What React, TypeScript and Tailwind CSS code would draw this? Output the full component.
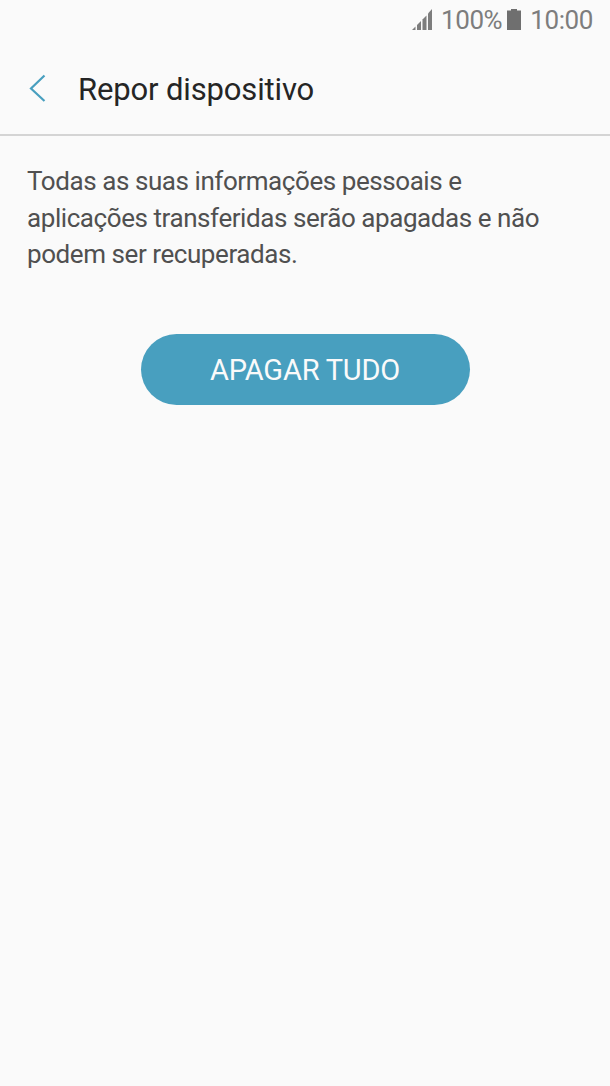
import React from 'react';

const SignalIcon: React.FC = () => (
  <svg className="-mt-px" width="21" height="21" viewBox="0 0 21 21" fill="#7d7d7d">
    <path d="M0 21L3.5 17.5V21z" />
    <path d="M5 21V16L9 12V21z" />
    <path d="M10.5 21V10.5L14.5 6.5V21z" />
    <path d="M16 21V4.5L20 0V21z" />
  </svg>
);

const BatteryIcon: React.FC = () => (
  <svg className="-mt-px" width="14" height="21" viewBox="0 0 14 21" fill="#6f6f6f">
    <path d="M4 0h6v1.5h4v19.5H0V1.5h4z" />
  </svg>
);

const App: React.FC = () => {
  return (
    <div className="flex h-[1086px] w-[610px] flex-col bg-[#fafafa] font-['Roboto',sans-serif]">
      <div className="flex h-10 items-center justify-end pr-[17px] text-[26px] tracking-[-0.4px] text-[#7d7d7d]">
        <SignalIcon />
        <span className="ml-[8px]">100%</span>
        <span className="ml-[5px]"><BatteryIcon /></span>
        <span className="ml-[9px]">10:00</span>
      </div>

      <header className="flex h-24 items-center border-b-2 border-[#d4d4d4] pl-[29px]">
        <svg className="mt-px" width="17" height="28" viewBox="0 0 17 28" fill="none" stroke="#489fbf" strokeWidth="2.2">
          <path d="M15.5 1.5L2 14.5L15.5 27" />
        </svg>
        <h1 className="ml-8 pt-[7px] text-[31px] tracking-[-0.15px] text-[#252525]">Repor dispositivo</h1>
      </header>

      <main className="flex flex-col items-center">
        <p className="mt-[27px] w-full pl-[27px] text-[26px] leading-[36.5px] tracking-[-0.43px] text-[#505050]">
          Todas as suas informações pessoais e<br />
          aplicações transferidas serão apagadas e não<br />
          podem ser recuperadas.
        </p>
        <button className="mt-[61px] h-[71px] w-[329px] rounded-full bg-[#489fbf] pt-[3px] text-[29px] tracking-[-0.2px] text-[#fafafa]">
          APAGAR TUDO
        </button>
      </main>
    </div>
  );
};

export default App;
